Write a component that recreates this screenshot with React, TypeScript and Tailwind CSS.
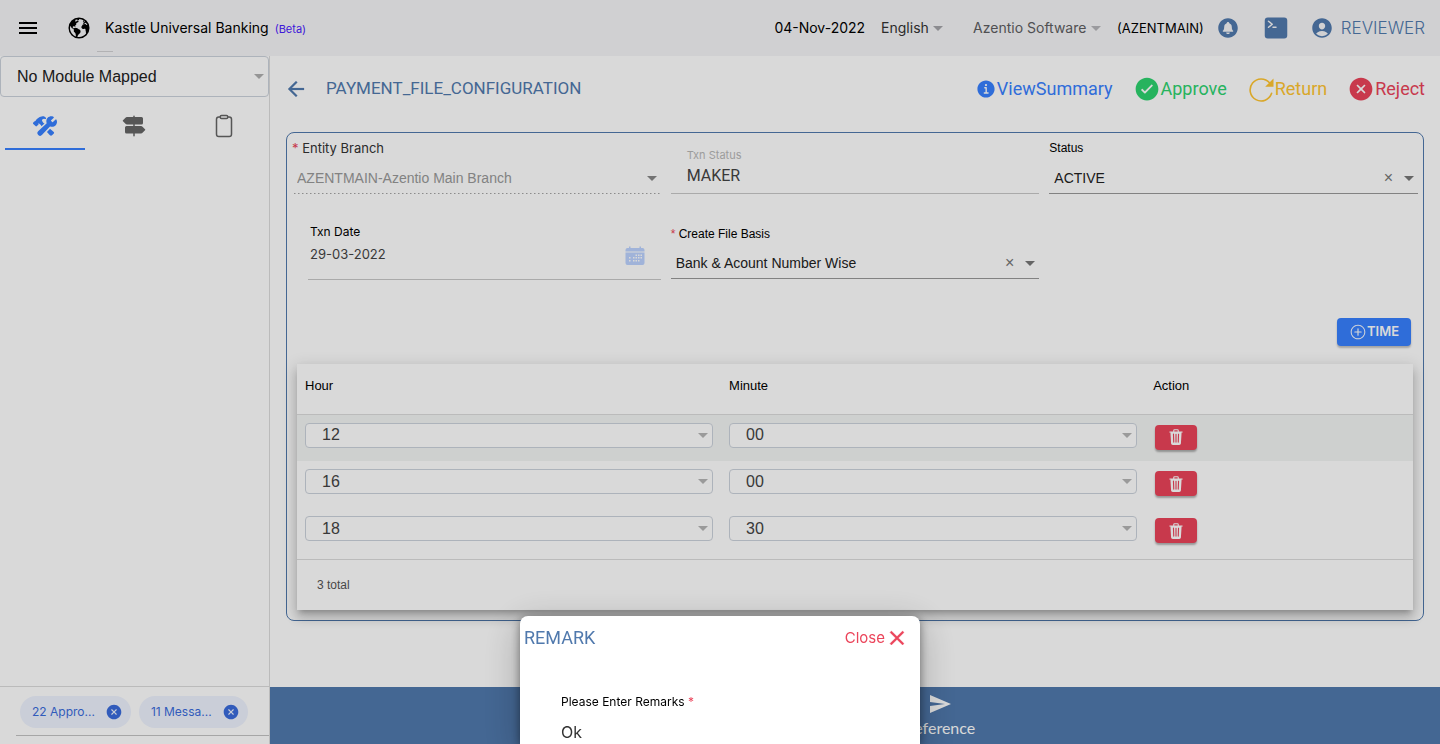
import type { ReactNode } from "react";
import { MdMenu, MdSend } from "react-icons/md";
import {
  IoMdArrowBack,
  IoIosCheckmarkCircle,
  IoIosCloseCircle,
  IoIosAddCircleOutline,
  IoMdClose,
} from "react-icons/io";
import {
  IoClipboardOutline,
  IoConstruct,
  IoEarth,
  IoNotificationsCircle,
  IoTerminal,
  IoPersonCircle,
  IoInformationCircle,
  IoTrailSign,
  IoTrash,
} from "react-icons/io5";

function Caret({ className = "" }: { className?: string }) {
  return (
    <svg
      viewBox="0 0 10 5"
      className={`pointer-events-none h-[5px] w-2.5 shrink-0 fill-current ${className}`}
      aria-hidden="true"
    >
      <path d="M0 0h10L5 5z" />
    </svg>
  );
}

function CalendarIcon() {
  return (
    <svg viewBox="0 0 20 20" className="h-5 w-5" aria-hidden="true">
      <path
        fill="#bcd3ff"
        d="M4 .5h1.500V2h9V.500H16V2h1.500a2 2 0 0 1 2 2v1.500H.500V4a2 2 0 0 1 2-2H4zM.500 6.500h19V17a2 2 0 0 1-2 2h-15a2 2 0 0 1-2-2z"
      />
      <g fill="#fff">
        <path d="M10.500 8.500H12V10h-1.500zM13 8.500h1.500V10H13zM15.500 8.500H17V10h-1.500zM8 11h1.500v1.500H8zM10.500 11H12v1.500h-1.500zM13 11h1.500v1.500H13zM15.500 11H17v1.500h-1.500zM4 11h1.500v1.500H4zM4 14h1.500v1.500H4zM8 14h1.500v1.500H8zM10.500 14H12v1.500h-1.500zM13 14h1.500v1.500H13z" />
      </g>
    </svg>
  );
}

function ReturnIcon() {
  return (
    <svg viewBox="-2 -2 28 28" className="h-7 w-7" aria-hidden="true">
      <path
        d="M20.500 5.800A11 11 0 1 0 22.600 16.300"
        fill="none"
        stroke="currentColor"
        strokeWidth="1.600"
        strokeLinecap="round"
      />
      <path d="M24.500 1.500v8.300h-8.300z" fill="currentColor" />
    </svg>
  );
}

function TopBar() {
  return (
    <header className="flex h-14 shrink-0 items-center bg-[#f5f5f7] pr-[15px] pl-4 font-[Inter,sans-serif] text-sm text-black">
      <button type="button" aria-label="Menu">
        <MdMenu className="h-6 w-6" />
      </button>
      <IoEarth className="ml-[27px] h-6 w-6" />
      <div className="ml-3.5 flex items-baseline gap-1.5">
        <h1 className="relative before:absolute before:top-[33px] before:-left-2 before:h-px before:w-4 before:bg-[#d2d2d4]">
          Kastle Universal Banking
        </h1>
        <span className="text-[11px] text-[#4a20ff]">(Beta)</span>
      </div>
      <div className="ml-auto flex items-center">
        <span>04-Nov-2022</span>
        <label className="ml-4 flex items-center text-[#333]">
          <select aria-label="Language" className="appearance-none outline-none">
            <option>English</option>
          </select>
          <Caret className="ml-1 text-[#a5a5aa]" />
        </label>
        <label className="ml-[30px] flex items-center text-[#5e5e62]">
          <select aria-label="Company" className="appearance-none outline-none">
            <option>Azentio Software</option>
          </select>
          <Caret className="ml-1 text-[#b5b5ba]" />
        </label>
        <span className="ml-4 text-[13px]">(AZENTMAIN)</span>
        <button type="button" aria-label="Notifications" className="ml-3 text-[#5079ad]">
          <IoNotificationsCircle className="h-6 w-6" />
        </button>
        <button type="button" aria-label="Terminal" className="ml-6 text-[#5079ad]">
          <IoTerminal className="h-6 w-6" />
        </button>
        <a href="#profile" className="ml-[22px] flex items-center text-[17px] text-[#5079ad]">
          <IoPersonCircle className="h-6 w-6" />
          <span className="ml-[7px] font-light">REVIEWER</span>
        </a>
      </div>
    </header>
  );
}

function Chip({ children }: { children: ReactNode }) {
  return (
    <span className="flex h-8 items-center rounded-full bg-[#eef3fe] pr-2 pl-3 font-[Inter,sans-serif] text-xs text-[#3a6cdc]">
      {children}
      <button type="button" aria-label="Dismiss" className="ml-2.5">
        <IoIosCloseCircle className="h-[18px] w-[18px]" />
      </button>
    </span>
  );
}

function Sidebar() {
  return (
    <aside className="flex w-[270px] shrink-0 flex-col border-r border-[#dcdcdc]">
      <label className="flex h-[41px] items-center rounded border border-[#ccd3dc] pr-1 pl-4 font-[Liberation_Sans,sans-serif] text-base text-[#222]">
        <select aria-label="Module" className="flex-1 appearance-none outline-none">
          <option>No Module Mapped</option>
        </select>
        <Caret className="text-[#b0b0b0]" />
      </label>
      <nav className="grid grid-cols-3 text-[#666]">
        <button
          type="button"
          aria-label="Tools"
          className="mx-[5px] flex h-[53px] items-center justify-center border-b-2 border-[#3880ff] pt-1.5 text-[#3880ff]"
        >
          <IoConstruct className="h-6 w-6" />
        </button>
        <button type="button" aria-label="Directions" className="flex h-[53px] items-center justify-center pt-1">
          <IoTrailSign className="h-6 w-6" />
        </button>
        <button type="button" aria-label="Clipboard" className="flex h-[53px] items-center justify-center pt-1">
          <IoClipboardOutline className="h-6 w-6" />
        </button>
      </nav>
      <div className="mt-auto h-[58px] border-t border-[#dcdcdc] pt-[9px] pl-4">
        <div className="flex h-10 gap-2 border-b border-[#c4c4c4] pl-1">
          <Chip>22 Appro...</Chip>
          <Chip>11 Messa...</Chip>
        </div>
      </div>
    </aside>
  );
}

function Action({ color, children }: { color: string; children: ReactNode }) {
  return (
    <button type="button" className={`flex items-center font-[Roboto,sans-serif] text-lg ${color}`}>
      {children}
    </button>
  );
}

function Clear() {
  return (
    <button type="button" aria-label="Clear" className="px-[11px] text-base leading-none text-[#777]">
      ×
    </button>
  );
}

function ConfigForm() {
  return (
    <div className="grid grid-cols-3 gap-x-2.5 gap-y-7 font-[Liberation_Sans,sans-serif] text-sm">
      <div className="flex h-14 flex-col justify-between bg-[linear-gradient(to_right,#777_25%,transparent_25%)] bg-[length:4px_1px] bg-bottom bg-repeat-x pb-px">
        <label htmlFor="branch" className="font-[Inter,sans-serif] text-[13px] leading-5 text-[#333]">
          <span className="text-[#eb445a]">*</span> Entity Branch
        </label>
        <div className="flex h-[30px] items-center pr-1 pl-[5px] text-[#999]">
          <select id="branch" className="flex-1 appearance-none outline-none">
            <option>AZENTMAIN-Azentio Main Branch</option>
          </select>
          <Caret className="text-[#888]" />
        </div>
      </div>
      <div className="flex h-14 flex-col border-b border-[#c8c8c8] px-4 pt-2 font-[Inter,sans-serif]">
        <label htmlFor="txn-status" className="text-[11px] leading-[18px] text-[#b8b8b8]">
          Txn Status
        </label>
        <input
          id="txn-status"
          defaultValue="MAKER"
          className="h-6 font-[Roboto,sans-serif] text-base text-[#444] outline-none"
        />
      </div>
      <div className="flex h-14 flex-col justify-between border-b border-[#999]">
        <label htmlFor="status" className="text-xs leading-5 text-black">
          Status
        </label>
        <div className="flex h-[30px] items-center pr-1 pl-[5px] text-[#222]">
          <select id="status" className="flex-1 appearance-none outline-none">
            <option>ACTIVE</option>
          </select>
          <Clear />
          <Caret className="text-[#777]" />
        </div>
      </div>
      <div className="ml-4 flex h-[58px] items-start justify-between border-b border-[#c8c8c8] font-[Inter,sans-serif]">
        <div className="flex flex-1 flex-col pl-0.5">
          <label htmlFor="txn-date" className="text-xs leading-5 text-black">
            Txn Date
          </label>
          <input id="txn-date" defaultValue="29-03-2022" className="h-6 text-[13px] text-[#444] outline-none" />
        </div>
        <button type="button" aria-label="Open calendar" className="mt-6 mr-4">
          <CalendarIcon />
        </button>
      </div>
      <div className="flex h-[57px] flex-col justify-between border-b border-[#999] pt-0.5">
        <label htmlFor="basis" className="text-xs leading-5 text-black">
          <span className="text-[#eb445a]">*</span> Create File Basis
        </label>
        <div className="flex h-[30px] items-center pr-1 pl-[5px] text-[#222]">
          <select id="basis" className="flex-1 appearance-none outline-none">
            <option>Bank &amp; Acount Number Wise</option>
          </select>
          <Clear />
          <Caret className="text-[#777]" />
        </div>
      </div>
    </div>
  );
}

function CellSelect({ label, value }: { label: string; value: string }) {
  return (
    <label className="flex h-[25px] items-center rounded border border-[#ccd3dc] bg-white pr-1 pl-4 text-[#444]">
      <select aria-label={label} className="flex-1 appearance-none outline-none">
        <option>{value}</option>
      </select>
      <Caret className="text-[#b5b5b5]" />
    </label>
  );
}

const TIMES = [
  { hour: "12", minute: "00" },
  { hour: "16", minute: "00" },
  { hour: "18", minute: "30" },
];

function TimeTable() {
  return (
    <div className="mx-[5px] mt-[18px] bg-white font-[Liberation_Sans,sans-serif] shadow-[0_5px_5px_-3px_rgba(0,0,0,0.2),0_8px_10px_1px_rgba(0,0,0,0.14),0_3px_14px_2px_rgba(0,0,0,0.12)]">
      <table className="w-full table-fixed border-b border-[#dcdcdc]">
        <thead>
          <tr className="h-[50px] border-b border-[#dcdcdc] text-left align-top text-[13px] leading-5 text-black">
            <th className="w-[38%] px-2 pt-3 font-normal">Hour</th>
            <th className="w-[38%] px-2 pt-3 font-normal">Minute</th>
            <th className="px-2 pt-3 font-normal">Action</th>
          </tr>
        </thead>
        <tbody>
          {TIMES.map((time) => (
            <tr key={time.hour} className="h-[47px] align-top first:bg-[#f3f5f4] last:h-[51px]">
              <td className="px-2 pt-2">
                <CellSelect label="Hour" value={time.hour} />
              </td>
              <td className="px-2 pt-2">
                <CellSelect label="Minute" value={time.minute} />
              </td>
              <td className="px-2.5 pt-2.5">
                <button
                  type="button"
                  aria-label="Delete"
                  className="flex h-[25px] w-[42px] items-center justify-center rounded bg-[#eb445a] text-white shadow-[0_2px_2px_rgba(0,0,0,0.3)]"
                >
                  <IoTrash className="h-[18px] w-[18px]" />
                </button>
              </td>
            </tr>
          ))}
        </tbody>
      </table>
      <p className="flex h-[50px] items-center pl-5 text-xs text-[#555]">3 total</p>
    </div>
  );
}

function RemarkDialog() {
  return (
    <div className="fixed inset-0 flex items-end justify-center overflow-hidden bg-black/15">
      <section
        role="dialog"
        aria-label="Remark"
        className="h-32 w-[400px] rounded-t-lg bg-white font-[Inter,sans-serif] shadow-[0_2px_10px_rgba(0,0,0,0.45),0_9px_36px_4px_rgba(0,0,0,0.2)]"
      >
        <div className="flex h-11 items-center justify-between pr-[11px] pl-1">
          <h2 className="font-[Roboto,sans-serif] text-lg text-[#5079ad]">REMARK</h2>
          <button type="button" className="flex items-center text-[15px] text-[#eb445a]">
            Close
            <IoMdClose className="h-6 w-6 stroke-current stroke-[8px]" />
          </button>
        </div>
        <div className="flex flex-col px-[41px] pt-8">
          <label htmlFor="remarks" className="text-xs leading-5 text-black">
            Please Enter Remarks <span className="text-[#eb445a]">*</span>
          </label>
          <input id="remarks" defaultValue="Ok" className="mt-2 h-6 text-base text-[#333] outline-none" />
        </div>
      </section>
    </div>
  );
}

export default function App() {
  return (
    <div className="flex h-screen flex-col overflow-hidden bg-white">
      <TopBar />
      <div className="flex min-h-0 flex-1">
        <Sidebar />
        <main className="flex min-w-0 flex-1 flex-col">
          <div className="flex h-[76px] shrink-0 items-center pr-[15px] pb-2.5 pl-3.5">
            <button type="button" aria-label="Back" className="text-[#5079ad]">
              <IoMdArrowBack className="h-6 w-6 stroke-current stroke-[4px]" />
            </button>
            <h2 className="ml-[18px] font-[Roboto,sans-serif] text-[17px] text-[#5079ad]">
              PAYMENT_FILE_CONFIGURATION
            </h2>
            <div className="ml-auto flex items-center gap-5">
              <Action color="text-[#3880ff]">
                <IoInformationCircle className="h-[22px] w-[22px]" />
                ViewSummary
              </Action>
              <Action color="text-[#2dd36f]">
                <IoIosCheckmarkCircle className="h-7 w-7" />
                Approve
              </Action>
              <Action color="text-[#ffc531]">
                <ReturnIcon />
                Return
              </Action>
              <Action color="text-[#eb445a]">
                <IoIosCloseCircle className="h-7 w-7" />
                Reject
              </Action>
            </div>
          </div>
          <div className="mx-4 rounded-lg border border-[#5079ad] p-[5px] pb-2.5">
            <ConfigForm />
            <div className="mt-[38px] flex justify-end pr-[7px]">
              <button
                type="button"
                className="flex h-7 items-center rounded bg-[#3880ff] px-3 font-[Inter,sans-serif] text-[13px] font-semibold text-white shadow-[0_2px_2px_rgba(0,0,0,0.25)]"
              >
                <IoIosAddCircleOutline className="h-[18px] w-[18px]" />
                TIME
              </button>
            </div>
            <TimeTable />
          </div>
          <footer className="mt-auto flex h-[57px] shrink-0 justify-center bg-[#5079ad] pl-[170px] text-white">
            <button type="button" className="flex flex-col items-center pt-[5px] font-[Lato,sans-serif] text-base">
              <MdSend className="h-6 w-6" />
              Reference
            </button>
          </footer>
        </main>
      </div>
      <RemarkDialog />
    </div>
  );
}
